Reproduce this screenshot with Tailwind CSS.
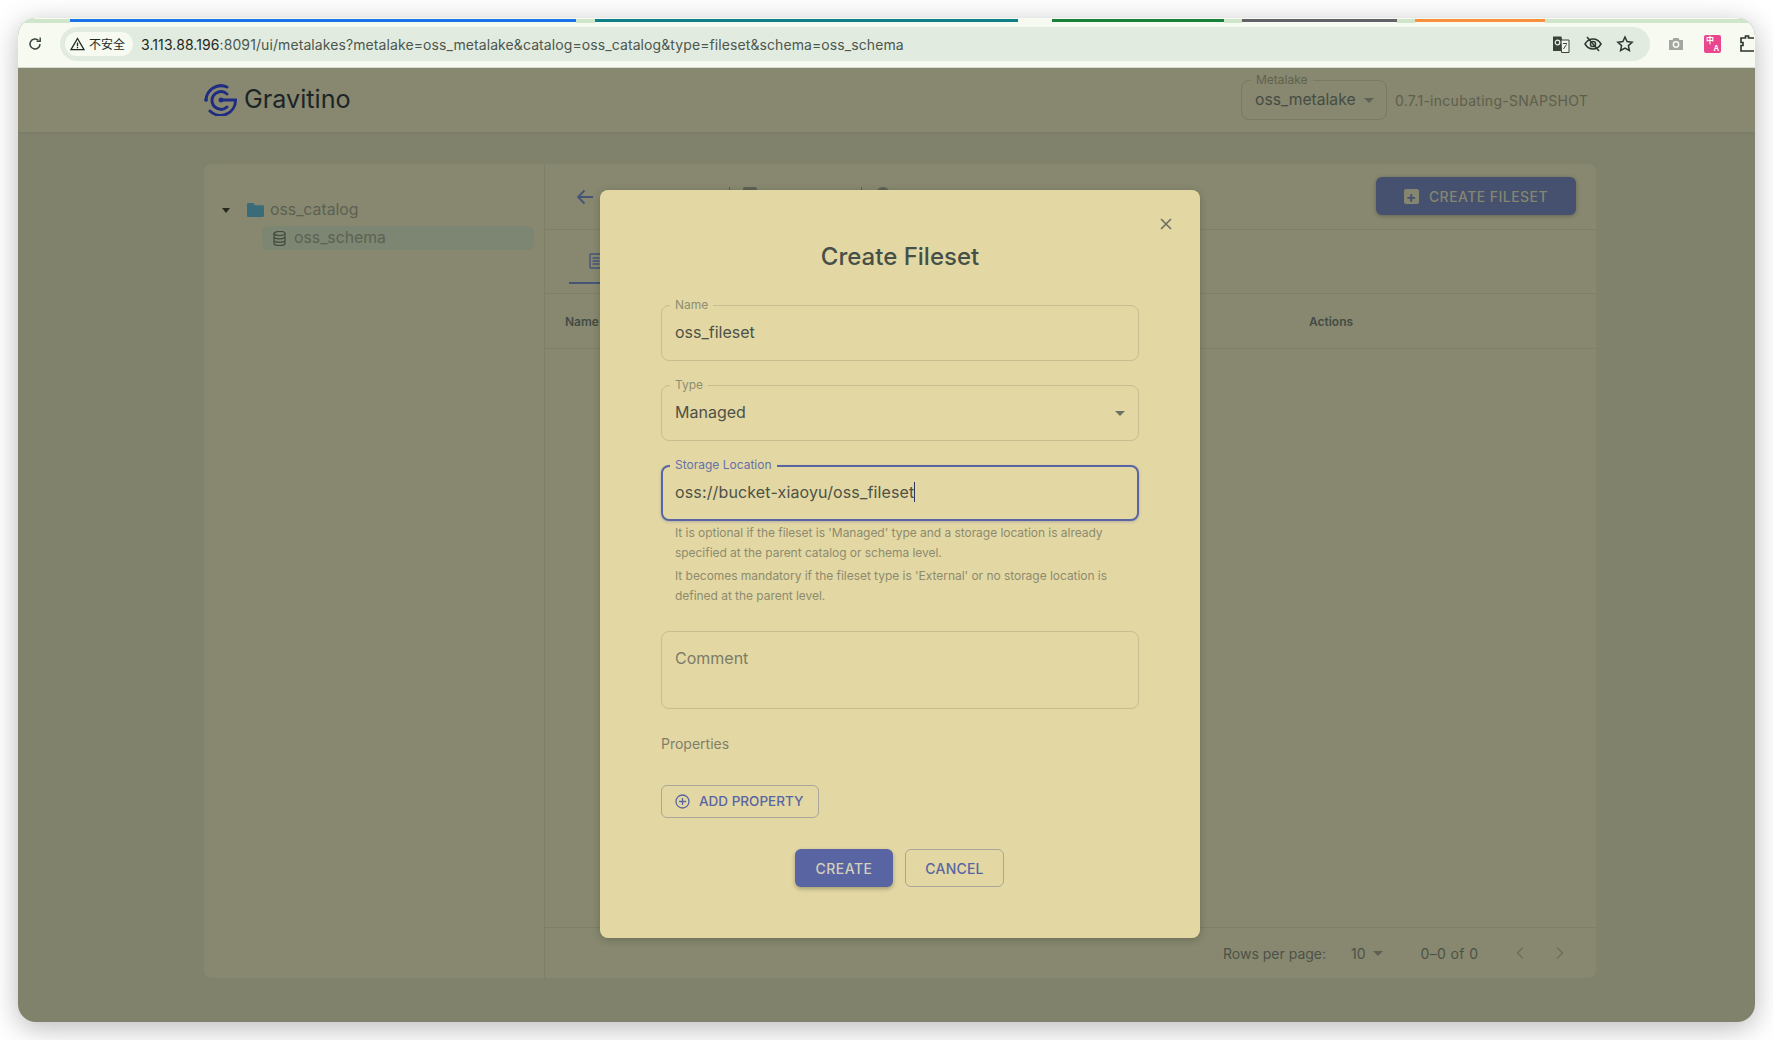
<!DOCTYPE html>
<html lang="en">
<head>
    <meta charset="UTF-8">
    <meta name="viewport" content="width=device-width, initial-scale=1.0">
    <title>Gravitino</title>
    <script src="https://cdn.jsdelivr.net/npm/@tailwindcss/browser@4"></script>
</head>
<body class="bg-white font-[Inter,sans-serif] w-[1773px] h-[1040px] overflow-hidden pl-[18px] pt-[18px]">

    <!-- browser window -->
    <div class="relative w-[1737px] h-[1004px] rounded-[18px] overflow-hidden flex flex-col bg-[#81826c] shadow-[0_6px_28px_rgba(0,0,0,0.28)]">

        <!-- tab strip -->
        <div class="h-[6px] bg-[#f6faf0] shrink-0 flex">
            <div class="w-[52px] h-[4px] mt-[1px] bg-[#cfe6cc]"></div>
            <div class="w-[506px] h-[3px] mt-[1px] bg-[#1a73e8]"></div>
            <div class="w-[19px] h-[4px] mt-[1px] bg-[#cfe6cc]"></div>
            <div class="w-[423px] h-[3px] mt-[1px] bg-[#0f7f86]"></div>
            <div class="w-[34px]"></div>
            <div class="w-[172px] h-[3px] mt-[1px] bg-[#188038]"></div>
            <div class="w-[18px] h-[4px] mt-[1px] bg-[#cfe6cc]"></div>
            <div class="w-[155px] h-[3px] mt-[1px] bg-[#5f6368]"></div>
            <div class="w-[18px] h-[4px] mt-[1px] bg-[#cfe6cc]"></div>
            <div class="w-[130px] h-[3px] mt-[1px] bg-[#fa903e]"></div>
            <div class="flex-1 h-[4px] mt-[1px] bg-[#cfe6cc]"></div>
        </div>

        <!-- toolbar -->
        <div class="h-[44px] shrink-0 bg-[#f6faf0] border-b border-[#d9dfd2] flex items-center pl-[9px] pb-[3px]">
            <svg class="w-[16px] h-[16px] shrink-0" viewBox="0 0 16 16" fill="none" stroke="#39443c" stroke-width="1.5">
                <path d="M13 8a5 5 0 1 1-1.6-3.7"/><path d="M13.2 1.6v3.6H9.6" stroke-width="1.4"/>
            </svg>
            <div class="ml-[17px] w-[1590px] h-[34px] rounded-full bg-[#e2ebdf] flex items-center pl-[5px] shrink-0">
                <div class="h-[24px] w-[68px] rounded-full bg-[#f6faf0] flex items-center pl-[5px] gap-[4px] shrink-0">
                    <svg class="w-[15px] h-[14px] shrink-0" viewBox="0 0 15 14" fill="none" stroke="#222a24" stroke-width="1.3">
                        <path d="M7.5 1.5 14 12.6H1z"/><path d="M7.5 5.4v3.8M7.5 10v1.2"/>
                    </svg>
                    <span class="text-[12px] text-[#222a24] font-['Noto_Sans_CJK_SC',sans-serif] whitespace-nowrap">不安全</span>
                </div>
                <div class="ml-[8px] text-[14px] tracking-[0.09px] whitespace-nowrap text-[#4c574f]"><span class="text-[#1f2721]">3.113.88.196</span>:8091/ui/metalakes?metalake=oss_metalake&amp;catalog=oss_catalog&amp;type=fileset&amp;schema=oss_schema</div>
                <div class="ml-auto flex items-center gap-[14px] pr-[16px]">
                    <svg class="w-[18px] h-[18px]" viewBox="0 0 18 18">
                        <path d="M1 1.5h8.5L12 16H1z" fill="#38423b"/>
                        <path d="M9 5h8v12.5H9.5z" fill="#f0f3ea" stroke="#38423b"/>
                        <circle cx="5.5" cy="7.5" r="2.3" fill="none" stroke="#f0f3ea" stroke-width="1.2"/>
                        <path d="M11 8.5h4M13 8v1M11.5 14l3-4.5" stroke="#38423b" fill="none"/>
                    </svg>
                    <svg class="w-[18px] h-[18px]" viewBox="0 0 18 18" fill="none" stroke="#2e3831" stroke-width="1.5">
                        <path d="M1 9s3-5 8-5 8 5 8 5-3 5-8 5-8-5-8-5z"/><circle cx="9" cy="9" r="2.6"/><path d="M3 2l12 14"/>
                    </svg>
                    <svg class="w-[18px] h-[18px]" viewBox="0 0 18 18" fill="none" stroke="#2e3831" stroke-width="1.5">
                        <path d="m9 2 2.1 4.6 5 .6-3.7 3.4 1 4.9L9 13.1l-4.4 2.4 1-4.9L1.900 7.200l5-.6z"/>
                    </svg>
                </div>
            </div>
            <div class="ml-[18px] flex items-center shrink-0">
                <svg class="w-[16px] h-[16px]" viewBox="0 0 16 16">
                    <path d="M1 4h3.500l1-2h5l1 2H15v10H1z" fill="#a3a6a1"/><circle cx="8" cy="8.500" r="3.400" fill="#f6faf0"/><circle cx="8" cy="8.500" r="1.900" fill="#a3a6a1"/>
                </svg>
                <div class="ml-[20px] w-[17px] h-[18px] rounded-[2px] bg-[#e8478d] text-white text-[8px] leading-[8px] font-bold flex flex-col justify-center px-[2px] font-['Noto_Sans_CJK_SC',sans-serif]">
                    <span class="self-start">中</span><span class="self-end">A</span>
                </div>
                <svg class="ml-[19px] w-[14px] h-[20px] shrink-0" viewBox="0 0 14 20" fill="none" stroke="#2a352d" stroke-width="1.600">
                    <path d="M14 4H8.500V2h-3v2H1v4.500h2v3H1V17h13"/>
                </svg>
            </div>
        </div>

        <!-- app header -->
        <header class="h-[64px] shrink-0 bg-[#87886f] flex items-center pl-[186px] shadow-[0_1px_3px_rgba(0,0,0,0.06)]">
            <svg class="w-[34px] h-[32px] shrink-0" viewBox="0 0 34 32" fill="none" stroke="#1f2c83" stroke-width="3" stroke-linecap="round">
                <path d="M23 3A15 15 0 0 0 2 16"/>
                <path d="M6 27A15 15 0 0 0 31.500 16H17"/>
                <path d="M23 10A9 9 0 0 0 8 16A9 9 0 0 0 23 23"/>
                <circle cx="2" cy="16" r="1.800" fill="#1f2c83" stroke="none"/>
                <circle cx="17" cy="16" r="2.500" fill="#1f2c83" stroke="none"/>
            </svg>
            <span class="ml-[6px] w-[107px] text-[25.200px] text-[#1c2428] leading-none whitespace-nowrap">Gravitino</span>
            <div class="ml-[890px] relative w-[146px] h-[40px] rounded-lg border border-[#797a64] flex items-center pl-[13px] shrink-0">
                <span class="absolute -top-[9px] left-[9px] px-[5px] bg-[#87886f] text-[12px] leading-[16px] text-[#60624f]">Metalake</span>
                <span class="text-[15.700px] text-[#454c44] whitespace-nowrap">oss_metalake</span>
                <span class="ml-[8px] w-0 h-0 border-x-[5px] border-x-transparent border-t-[5px] border-t-[#5f6354]"></span>
            </div>
            <span class="ml-[8px] text-[14px] tracking-[0.28px] text-[#5d5f4d] whitespace-nowrap">0.7.1-incubating-SNAPSHOT</span>
        </header>

        <!-- page -->
        <main class="flex-1 pl-[186px] pt-[32px] pb-[44px]">
            <div class="w-[1392px] h-full rounded-lg bg-[#87886f] flex">
                <!-- tree -->
                <aside class="w-[341px] shrink-0 border-r border-[#7e7f68] pt-[32px]">
                    <div class="h-[28px] flex items-center pl-[18px]">
                        <span class="w-0 h-0 border-x-[4px] border-x-transparent border-t-[5px] border-t-[#26291f]"></span>
                        <svg class="ml-[17px] w-[17px] h-[16px] shrink-0" viewBox="0 0 18 16" fill="#3a6b79">
                            <path d="M0 2a1.500 1.500 0 0 1 1.500-1.500h5L8.500 3H16.500A1.500 1.500 0 0 1 18 4.500V14a1.500 1.500 0 0 1-1.500 1.500h-15A1.500 1.500 0 0 1 0 14z"/>
                        </svg>
                        <span class="ml-[6px] text-[15.800px] text-[#5c6153]">oss_catalog</span>
                    </div>
                    <div class="ml-[58px] mr-[10px] mt-[2px] h-[24px] rounded-md bg-[#7d8672] flex items-center pl-[11px]">
                        <svg class="w-[13px] h-[15px] shrink-0" viewBox="0 0 13 15" fill="none" stroke="#43483d" stroke-width="1.200">
                            <ellipse cx="6.500" cy="2.500" rx="5.500" ry="2"/>
                            <path d="M1 2.500v10c0 1.100 2.500 2 5.500 2s5.500-.9 5.500-2v-10M1 5.800c0 1.100 2.500 2 5.500 2s5.500-.9 5.500-2M1 9.200c0 1.100 2.500 2 5.500 2s5.500-.9 5.500-2"/>
                        </svg>
                        <span class="ml-[8px] text-[15.800px] text-[#5c6153]">oss_schema</span>
                    </div>
                </aside>

                <!-- detail -->
                <section class="flex-1 flex flex-col">
                    <div class="h-[66px] shrink-0 border-b border-[#7e7f68] flex items-center pl-[31px] pr-[20px]">
                        <svg class="w-[18px] h-[16px] shrink-0" viewBox="0 0 18 16" fill="none" stroke="#465478" stroke-width="1.800">
                            <path d="M17 8H2M8.500 1.500 2 8l6.500 6.500"/>
                        </svg>
                        <!-- breadcrumb, only its top edge shows above the dialog -->
                        <span class="ml-[135px] w-px h-[20px] bg-[#5f6354]"></span>
                        <span class="ml-[13px] w-[14px] h-[20px] rounded-[2px] bg-[#5f6354]"></span>
                        <span class="ml-[104px] w-px h-[20px] bg-[#5f6354]"></span>
                        <span class="ml-[14px] w-[14px] h-[20px] rounded-full bg-[#5f6354]"></span>
                        <button class="ml-auto -mt-[1px] w-[200px] h-[38px] rounded-md bg-[#465170] text-[#84866f] text-[14px] font-medium tracking-[0.45px] flex items-center justify-center gap-[10px] shadow-[0_1px_4px_rgba(0,0,0,0.25)]">
                            <span class="w-[15px] h-[15px] rounded-[2px] bg-[#84866f] text-[#465170] text-[15px] leading-[15px] font-bold text-center">+</span>
                            CREATE FILESET
                        </button>
                    </div>
                    <div class="h-[64px] shrink-0 border-b border-[#7e7f68] pl-[24px]">
                        <div class="w-[60px] h-[54px] border-b-2 border-[#465478] flex items-center pl-[20px] pt-[10px]">
                            <svg class="w-[14px] h-[16px]" viewBox="0 0 14 16" fill="none" stroke="#465478" stroke-width="1.400">
                                <rect x="1" y="1" width="12" height="14" rx="1"/><path d="M3.500 5h7M3.500 8h7M3.500 11h7"/>
                            </svg>
                        </div>
                    </div>
                    <div class="h-[55px] shrink-0 border-b border-[#7e7f68] flex items-center pl-[20px] pt-[1px] text-[12px] font-semibold text-[#444b44]">
                        <span>Name</span>
                        <span class="ml-[710px]">Actions</span>
                    </div>
                    <div class="flex-1"></div>
                    <div class="h-[51px] shrink-0 border-t border-[#7e7f68] flex items-center text-[14px] text-[#4c5248] pl-[678px]">
                        <span class="whitespace-nowrap">Rows per page:</span>
                        <span class="ml-[25px]">10</span>
                        <span class="ml-[7px] w-0 h-0 border-x-[5px] border-x-transparent border-t-[5px] border-t-[#5c6053]"></span>
                        <span class="ml-[38px] whitespace-nowrap tracking-[0.35px]">0–0 of 0</span>
                        <svg class="ml-[37px] w-[10px] h-[14px]" viewBox="0 0 10 14" fill="none" stroke="#6f7160" stroke-width="1.600"><path d="M8 1.500 2.500 7 8 12.500"/></svg>
                        <svg class="ml-[30px] w-[10px] h-[14px]" viewBox="0 0 10 14" fill="none" stroke="#6f7160" stroke-width="1.600"><path d="M2 1.500 7.500 7 2 12.500"/></svg>
                    </div>
                </section>
            </div>
        </main>

        <!-- dialog -->
        <div class="absolute left-[582px] top-[172px] w-[600px] h-[748px] rounded-lg bg-[#e3d8a3] shadow-[0_2px_8px_rgba(0,0,0,0.2)] px-[61px] pt-[51px]">
            <svg class="absolute right-[28px] top-[28px] w-[12px] h-[12px]" viewBox="0 0 12 12" fill="none" stroke="#6b6e62" stroke-width="1.600">
                <path d="m1 1 10 10M11 1 1 11"/>
            </svg>
            <h2 class="text-center text-[24px] leading-[32px] font-medium text-[#465048]">Create Fileset</h2>

            <div class="relative mt-[32px] h-[56px] rounded-lg border border-[#c6bd90] flex items-center pl-[13px] pb-[2px] text-[16px] text-[#4d5148]">
                <span class="absolute -top-[9px] left-[8px] px-[5px] bg-[#e3d8a3] text-[12px] leading-[16px] text-[#8e8d72]">Name</span>
                oss_fileset
            </div>
            <div class="relative mt-[24px] h-[56px] rounded-lg border border-[#c6bd90] flex items-center pl-[13px] pb-[2px] text-[16px] text-[#4d5148]">
                <span class="absolute -top-[9px] left-[8px] px-[5px] bg-[#e3d8a3] text-[12px] leading-[16px] text-[#8e8d72]">Type</span>
                Managed
                <span class="absolute right-[13px] top-[25px] w-0 h-0 border-x-[5px] border-x-transparent border-t-[5px] border-t-[#6d7064]"></span>
            </div>
            <div class="relative mt-[24px] h-[56px] rounded-lg border-2 border-[#5965a3] flex items-center pl-[12px] pb-[2px] text-[16px] text-[#4d5148] shadow-[0_1px_3px_rgba(89,101,163,0.35)]">
                <span class="absolute -top-[10px] left-[7px] px-[5px] bg-[#e3d8a3] text-[12px] leading-[16px] text-[#6670a8]">Storage Location</span>
                <span class="border-r border-[#2f3560] leading-[20px] tracking-[0.14px]">oss://bucket-xiaoyu/oss_fileset</span>
            </div>
            <div class="mt-[2px] pl-[14px] pr-[14px] text-[12px] leading-[20px] tracking-[-0.04px] text-[#8d8b6f]">
                <p>It is optional if the fileset is 'Managed' type and a storage location is already specified at the parent catalog or schema level.</p>
                <p class="mt-[3px]">It becomes mandatory if the fileset type is 'External' or no storage location is defined at the parent level.</p>
            </div>
            <div class="mt-[25px] h-[78px] rounded-lg border border-[#c6bd90] pl-[13px] pt-[14px] text-[16px] leading-[24px] text-[#7b7b68]">Comment</div>
            <div class="mt-[23px] text-[14px] leading-[24px] text-[#7f7f69]">Properties</div>
            <button class="mt-[29px] w-[158px] h-[33px] rounded-md border border-[#a9a79a] flex items-center pl-[13px] text-[13.500px] font-medium text-[#5965a3]">
                <svg class="w-[15px] h-[15px] shrink-0" viewBox="0 0 15 15" fill="none" stroke="#5965a3" stroke-width="1.300">
                    <circle cx="7.500" cy="7.500" r="6.500"/><path d="M7.500 4v7M4 7.500h7"/>
                </svg>
                <span class="ml-[9px] whitespace-nowrap">ADD PROPERTY</span>
            </button>
            <div class="mt-[31px] flex justify-center gap-[12px] pr-[1px]">
                <button class="w-[98px] h-[38px] rounded-md bg-[#5965a3] text-[#d5d0bb] text-[14px] font-medium tracking-[0.5px] shadow-[0_2px_4px_rgba(0,0,0,0.28)]">CREATE</button>
                <button class="w-[99px] h-[38px] rounded-md border border-[#a9a79a] text-[#5965a3] text-[14px] font-medium tracking-[0.2px]">CANCEL</button>
            </div>
        </div>
    </div>

</body>
</html>
